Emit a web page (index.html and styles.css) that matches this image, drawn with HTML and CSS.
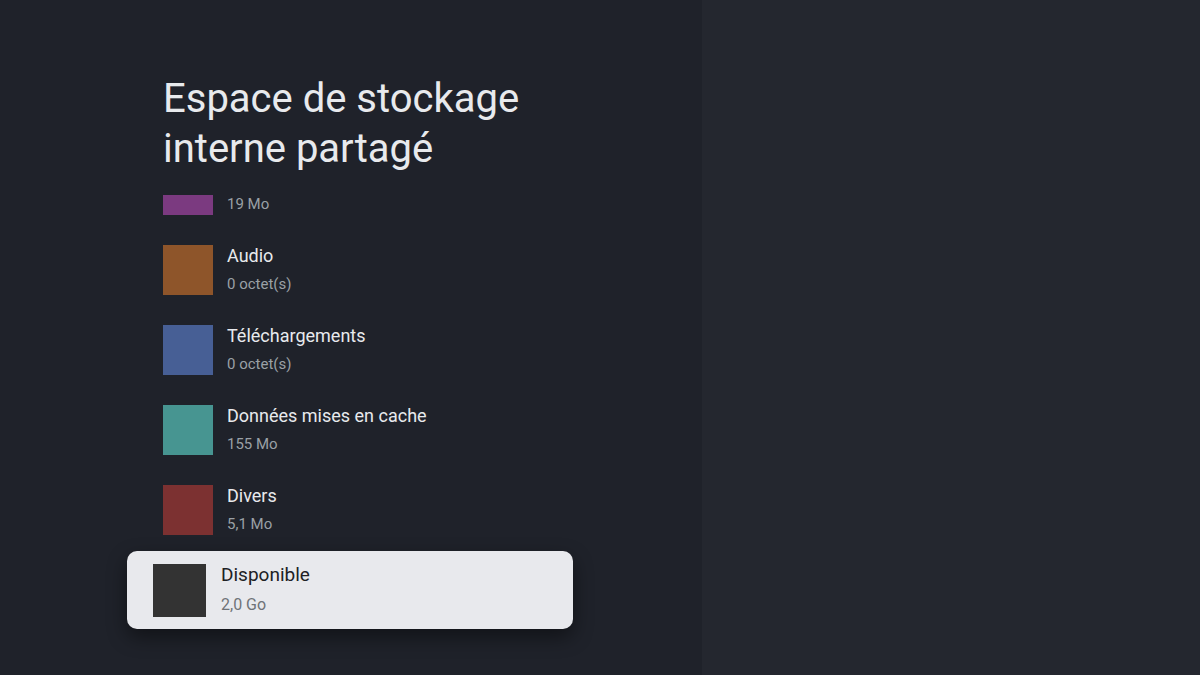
FILE: index.html
```html
<!DOCTYPE html>
<html lang="fr">
  <head>
    <title>Espace de stockage interne partagé</title>
    <link rel="stylesheet" href="styles.css">
  </head>
  <body>
    <div class="screen">
      <div class="panel">
        <h1 class="title">Espace de stockage<br>interne partagé</h1>
        <div class="list">
          <div class="list-inner">
            <!-- first row is scrolled up: only its bottom shows -->
            <div class="row">
              <div class="swatch purple"></div>
              <div class="text">
                <div class="label"></div>
                <div class="size">19 Mo</div>
              </div>
            </div>
            <div class="row">
              <div class="swatch orange"></div>
              <div class="text">
                <div class="label">Audio</div>
                <div class="size">0 octet(s)</div>
              </div>
            </div>
            <div class="row">
              <div class="swatch blue"></div>
              <div class="text">
                <div class="label">Téléchargements</div>
                <div class="size">0 octet(s)</div>
              </div>
            </div>
            <div class="row">
              <div class="swatch teal"></div>
              <div class="text">
                <div class="label">Données mises en cache</div>
                <div class="size">155 Mo</div>
              </div>
            </div>
            <div class="row">
              <div class="swatch red"></div>
              <div class="text">
                <div class="label">Divers</div>
                <div class="size">5,1 Mo</div>
              </div>
            </div>
            <div class="row focused">
              <div class="swatch grey"></div>
              <div class="text">
                <div class="label">Disponible</div>
                <div class="size">2,0 Go</div>
              </div>
            </div>
          </div>
        </div>
      </div>
      <div class="side"></div>
    </div>
  </body>
</html>
```

FILE: styles.css
```css
html, body {
  margin: 0;
  padding: 0;
}

body {
  font-family: Roboto, "Noto Sans", sans-serif;
  background-color: #24272f;
}

.screen {
  display: flex;
  width: 1200px;
  height: 675px;
}

.panel {
  width: 702px;
  height: 675px;
  background-color: #1f222a;
  padding-top: 74px;
  box-sizing: border-box;
}

.side {
  flex: 1;
  background-color: #24272f;
}

.title {
  margin: 0 0 21px 163px;
  font-size: 40px;
  font-weight: 400;
  line-height: 50px;
  color: #e8eaed;
}

/* the list is scrolled: the first row is cut at the top */
.list {
  height: 480px;
  overflow: hidden;
}

.list-inner {
  display: flex;
  flex-direction: column;
  gap: 30px;
  margin-top: -30px;
  padding-left: 163px;
}

.row {
  display: flex;
  gap: 14px;
}

.swatch {
  width: 50px;
  height: 50px;
  flex-shrink: 0;
}

.purple { background-color: #7b3a80; }
.orange { background-color: #8e552a; }
.blue { background-color: #475f95; }
.teal { background-color: #479591; }
.red { background-color: #7c3131; }
.grey { background-color: #333333; }

.label {
  height: 22px;
  font-size: 18px;
  line-height: 22px;
  color: #e8eaed;
}

.size {
  margin-top: 7px;
  font-size: 15px;
  line-height: 20px;
  color: #9aa0a6;
}

.focused {
  width: 446px;
  margin: -14px 0 0 -36px;
  padding: 13px 26px 12px;
  gap: 15px;
  box-sizing: border-box;
  background-color: #e8e9ed;
  border-radius: 10px;
  box-shadow: 0 8px 20px rgba(0, 0, 0, 0.45);
}

.focused .swatch {
  width: 53px;
  height: 53px;
}

.focused .label {
  font-size: 19px;
  color: #202124;
}

.focused .size {
  margin-top: 9px;
  font-size: 16px;
  color: #6f7378;
}
```
